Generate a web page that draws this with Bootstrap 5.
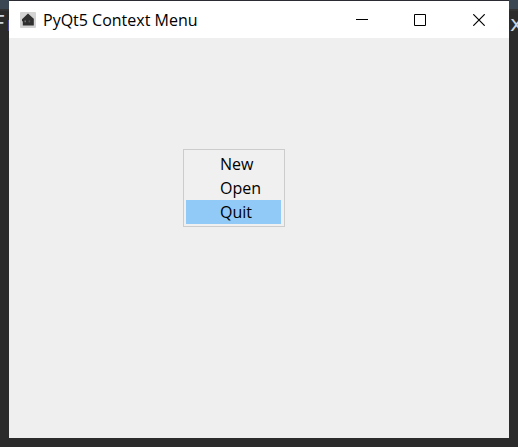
<!DOCTYPE html>
<html lang="en">
<head>
<meta charset="utf-8">
<meta name="viewport" content="width=device-width, initial-scale=1">
<title>PyQt5 Context Menu</title>
<link href="https://cdn.jsdelivr.net/npm/bootstrap@5.3.0/dist/css/bootstrap.min.css" rel="stylesheet">
<style>
body { font-family: "Open Sans", "Noto Sans", sans-serif; font-size: 16px; line-height: 24px; color: #000; background: #2b2b2b; }
.desk { padding: 1px 9px 9px; }
.editor-bar { height: 11px; background: #3c4754; border-bottom: 2px solid #323232; }
.editor-text { top: 10px; font: 22px/28px "DejaVu Sans Mono", monospace; color: #ccd4dc; }
.editor-left { left: -8px; }
.editor-right { right: -5px; }
.editor-caret { left: 8px; top: 20px; width: 1px; height: 11px; background: #45458c; }
.app-window { background: #efefef; box-shadow: 0 -1px 0 #2b2b33; }
.title-bar { height: 37px; background: #fff; padding-left: 11px; }
.app-title { font-size: 16px; line-height: 24px; margin-left: 7px; }
.win-btn { width: 58px; height: 37px; color: #000; background: none; }
.win-btn.win-close { width: 60px; }
.win-btn:hover { background: #e5e5e5; }
.win-btn svg { display: block; margin: auto; }
.context-menu { left: 174px; top: 148px; min-width: 102px; padding: 2px 3px 2px 2px; background: #f0f0f0; border: 1px solid #ccc; }
.menu-entry { padding: 0 20px 0 34px; line-height: 24px; color: #000; background: none; }
.menu-entry.current, .menu-entry:hover { background: #91c9f7; }
</style>
<script src="https://cdn.jsdelivr.net/npm/bootstrap@5.3.0/dist/js/bootstrap.bundle.min.js" defer></script>
</head>
<body>
<div class="editor-bar position-absolute top-0 start-0 w-100"></div>
<div class="desk position-relative vh-100 d-flex flex-column overflow-hidden">
  <span class="editor-text editor-left position-absolute">F</span>
  <span class="editor-caret position-absolute"></span>
  <span class="editor-text editor-right position-absolute">x</span>
  <main class="app-window position-relative flex-grow-1 d-flex flex-column">
    <header class="title-bar d-flex align-items-center">
      <svg width="16" height="16" viewBox="0 0 16 16" aria-hidden="true">
        <rect width="16" height="16" rx="1" fill="#d3d3d3"/>
        <path d="M8 1.4 2 7.2v2h.8V13.6h11V6.8z" fill="#303030"/>
        <path d="M4.5 8.6h1.5v1.6H4.5z" fill="#777"/>
        <path d="M8.6 8.4h1.6v2H8.6z" fill="#555"/>
      </svg>
      <h1 class="app-title fw-normal mb-0 me-auto text-nowrap">PyQt5 Context Menu</h1>
      <button type="button" class="win-btn border-0 p-0" aria-label="Minimize">
        <svg width="12" height="12" viewBox="0 0 12 12"><path d="M0 5.5h12" stroke="#000"/></svg>
      </button>
      <button type="button" class="win-btn border-0 p-0" aria-label="Maximize">
        <svg width="12" height="12" viewBox="0 0 12 12"><path d="M.5.5h11v11H.5z" fill="none" stroke="#000"/></svg>
      </button>
      <button type="button" class="win-btn win-close border-0 p-0" aria-label="Close">
        <svg width="12" height="12" viewBox="0 0 12 12"><path d="m.3.3 11.4 11.4m0-11.4L.3 11.7" stroke="#000" stroke-width="1.2"/></svg>
      </button>
    </header>
    <div class="context-menu position-absolute d-flex flex-column" role="menu">
      <button type="button" class="menu-entry border-0 text-start" role="menuitem">New</button>
      <button type="button" class="menu-entry border-0 text-start" role="menuitem">Open</button>
      <button type="button" class="menu-entry current border-0 text-start" role="menuitem">Quit</button>
    </div>
  </main>
</div>
</body>
</html>
